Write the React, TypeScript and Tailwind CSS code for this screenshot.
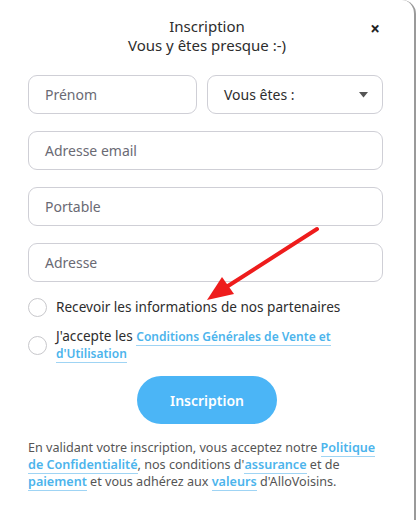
import React from "react";

const font = { fontFamily: '"Noto Sans", "Open Sans", sans-serif' };

function Field({ label }: { label: string }) {
  return (
    <div className="h-[39px] rounded-[9px] border border-[#cfcfd6] bg-white flex items-center px-[16px] text-[14px] text-[#6a6a74]">
      {label}
    </div>
  );
}

function Link({ children }: { children: React.ReactNode }) {
  return (
    <span className="text-[#4cb4ec] font-semibold border-b border-[#9fd4f4]">{children}</span>
  );
}

export default function App() {
  return (
    <div className="w-[417px] h-[520px] bg-white relative overflow-hidden" style={font}>
      <div className="w-[416px] h-[520px] bg-white rounded-tr-[14px] border-r-2 border-[#9a9a9a] px-[28px] pt-[17px]">
        <div className="relative text-center text-[15px] leading-[19px] text-[#2d2d2d]">
          <div>Inscription</div>
          <div>Vous y êtes presque :-)</div>
          <div className="absolute right-[6px] top-[3px] text-[17px] font-bold text-[#222] leading-[18px]">×</div>
        </div>
        <div className="mt-[20px] w-[355px] flex flex-col gap-[17px]">
          <div className="flex gap-[10px]">
            <div className="w-[169px]">
              <Field label="Prénom" />
            </div>
            <div className="flex-1 h-[39px] rounded-[9px] border border-[#cfcfd6] bg-white flex items-center justify-between pl-[16px] pr-[14px] text-[14px] text-[#2d2d2d]">
              <span>Vous êtes :</span>
              <svg width="9" height="6" viewBox="0 0 9 6"><path d="M0 0h9L4.5 5.5z" fill="#555" /></svg>
            </div>
          </div>
          <Field label="Adresse email" />
          <Field label="Portable" />
          <Field label="Adresse" />
        </div>
        <div className="mt-[15px] flex items-center gap-[9px] text-[13.6px] text-[#2d2d2d]">
          <div className="w-[19px] h-[19px] rounded-full border border-[#c8c8cc] shrink-0" />
          <span>Recevoir les informations de nos partenaires</span>
        </div>
        <div className="mt-[11px] flex items-center gap-[9px] text-[#2d2d2d]">
          <div className="w-[19px] h-[19px] rounded-full border border-[#c8c8cc] shrink-0" />
          <div className="text-[13.6px] leading-[16px]">
            J'accepte les{" "}
            <span className="text-[12px] text-[#4cb4ec] font-semibold border-b border-[#9fd4f4]">Conditions Générales de Vente et</span>
            <br />
            <span className="text-[12px] text-[#4cb4ec] font-semibold border-b border-[#9fd4f4]">d'Utilisation</span>
          </div>
        </div>
        <div className="mt-[14px] flex justify-center">
          <button className="w-[140px] h-[48px] rounded-full bg-[#4bb5f6] text-white text-[14px] font-semibold">
            Inscription
          </button>
        </div>
        <p className="mt-[15px] text-[12.6px] leading-[17px] text-[#555] whitespace-nowrap">
          En validant votre inscription, vous acceptez notre <Link>Politique</Link>
          <br />
          <Link>de Confidentialité</Link>, nos conditions d'<Link>assurance</Link> et de
          <br />
          <Link>paiement</Link> et vous adhérez aux <Link>valeurs</Link> d'AlloVoisins.
        </p>
      </div>
      <svg className="absolute left-0 top-0 pointer-events-none" width="417" height="520">
        <line x1="317" y1="229" x2="228" y2="286" stroke="#ee1c1c" strokeWidth="4" strokeLinecap="round" />
        <path d="M207 300 L222 277 L234 294 Z" fill="#ee1c1c" />
      </svg>
    </div>
  );
}
